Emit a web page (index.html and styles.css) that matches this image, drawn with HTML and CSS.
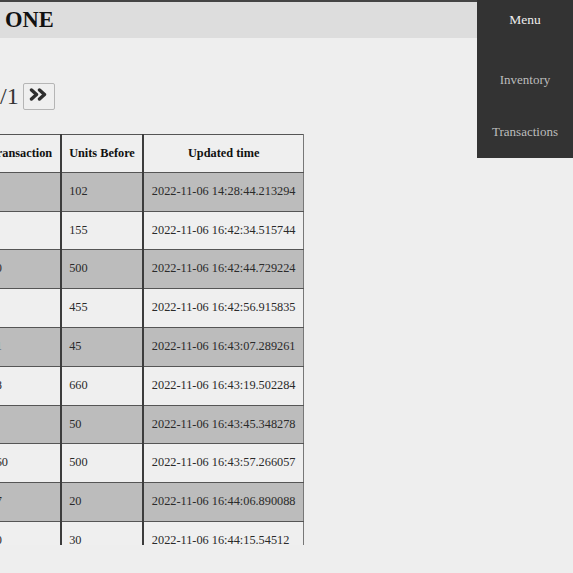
FILE: index.html
```html
<!DOCTYPE html>
<html>
<head>
<meta charset="utf-8">
<title>Transactions</title>
<link rel="stylesheet" href="styles.css">
</head>
<body>
<header class="topbar">
  <h1 class="title">ONE</h1>
</header>
<main class="main">
  <div class="pager">
    <span class="pager-text">1/1</span>
    <button class="pager-btn" type="button" aria-label="Next page">
      <svg width="19" height="13" viewBox="0 0 19 13" aria-hidden="true">
        <polyline points="2.5,2 7.5,6.5 2.5,11" fill="none" stroke="#2e2e2e" stroke-width="3.4" stroke-linecap="round" stroke-linejoin="round"/>
        <polyline points="10.5,2 15.5,6.5 10.5,11" fill="none" stroke="#2e2e2e" stroke-width="3.4" stroke-linecap="round" stroke-linejoin="round"/>
      </svg>
    </button>
  </div>
  <div class="table-wrap">
    <table class="tx-table">
      <thead>
        <tr><th>Transaction</th><th>Units Before</th><th>Updated time</th></tr>
      </thead>
      <tbody>
        <tr><td>1</td><td>102</td><td>2022-11-06 14:28:44.213294</td></tr>
        <tr><td>5</td><td>155</td><td>2022-11-06 16:42:34.515744</td></tr>
        <tr><td>50</td><td>500</td><td>2022-11-06 16:42:44.729224</td></tr>
        <tr><td>3</td><td>455</td><td>2022-11-06 16:42:56.915835</td></tr>
        <tr><td>41</td><td>45</td><td>2022-11-06 16:43:07.289261</td></tr>
        <tr><td>18</td><td>660</td><td>2022-11-06 16:43:19.502284</td></tr>
        <tr><td>7</td><td>50</td><td>2022-11-06 16:43:45.348278</td></tr>
        <tr><td>460</td><td>500</td><td>2022-11-06 16:43:57.266057</td></tr>
        <tr><td>17</td><td>20</td><td>2022-11-06 16:44:06.890088</td></tr>
        <tr><td>10</td><td>30</td><td>2022-11-06 16:44:15.54512</td></tr>
      </tbody>
    </table>
  </div>
</main>
<nav class="menu">
  <div class="menu-title">Menu</div>
  <a class="menu-link" href="#">Inventory</a>
  <a class="menu-link" href="#">Transactions</a>
</nav>
</body>
</html>
```
FILE: styles.css
```css
html, body {
  margin: 0;
  padding: 0;
}
body {
  background: #eeeeee;
  color: #222;
  font-family: "Liberation Serif", "Times New Roman", serif;
  overflow: hidden;
}
.topbar {
  border-top: 2px solid #444;
  background: #dddddd;
  height: 36px;
  display: flex;
  align-items: center;
  padding-left: 5px;
}
.title {
  margin: 0;
  font-size: 22.5px;
  font-weight: bold;
  color: #111;
  line-height: 36px;
}
.main {
  margin-left: -20px;
}
.pager {
  display: flex;
  align-items: center;
  margin-top: 45px;
  padding-left: 8px;
  height: 27px;
}
.pager-text {
  font-size: 24px;
  color: #333;
}
.pager-btn {
  margin-left: 4px;
  width: 32px;
  height: 27px;
  border: 1px solid #b5b5b5;
  border-radius: 2px;
  background: #efefef;
  padding: 0 0 4px 0;
  display: flex;
  align-items: center;
  justify-content: center;
}
.table-wrap {
  margin-top: 24px;
  height: 411px;
  overflow: hidden;
}
.tx-table {
  border-collapse: collapse;
  font-size: 12.3px;
  white-space: nowrap;
  border-top: 1px solid #666;
  border-right: 1px solid #777;
}
.tx-table th,
.tx-table td {
  padding: 12px 7.5px;
  border-top: 1px solid #555;
  border-bottom: 1px solid #555;
  border-left: 2px solid #3c3c3c;
  border-right: 2px solid #3c3c3c;
  line-height: 13.8px;
}
.tx-table th {
  font-weight: bold;
  text-align: center;
  background: #efefef;
  color: #111;
  padding-top: 11.5px;
  padding-bottom: 11.5px;
}
.tx-table td {
  text-align: left;
  color: #2a2a2a;
}
.tx-table tbody tr:nth-child(odd) td {
  background: #bcbcbc;
}
.tx-table tbody tr:nth-child(even) td {
  background: #efefef;
}
.tx-table th:last-child,
.tx-table td:last-child {
  border-right: 1px solid #777;
}
.menu {
  position: fixed;
  top: 0;
  right: 0;
  width: 96px;
  height: 158px;
  background: #333333;
  display: flex;
  flex-direction: column;
  align-items: center;
}
.menu-title {
  height: 40px;
  line-height: 40px;
  margin-bottom: 14px;
  color: #eeeeee;
  font-size: 13.5px;
}
.menu-link {
  display: block;
  height: 52px;
  line-height: 52px;
  color: #bdbdbd;
  font-size: 13px;
  text-decoration: none;
}
```
